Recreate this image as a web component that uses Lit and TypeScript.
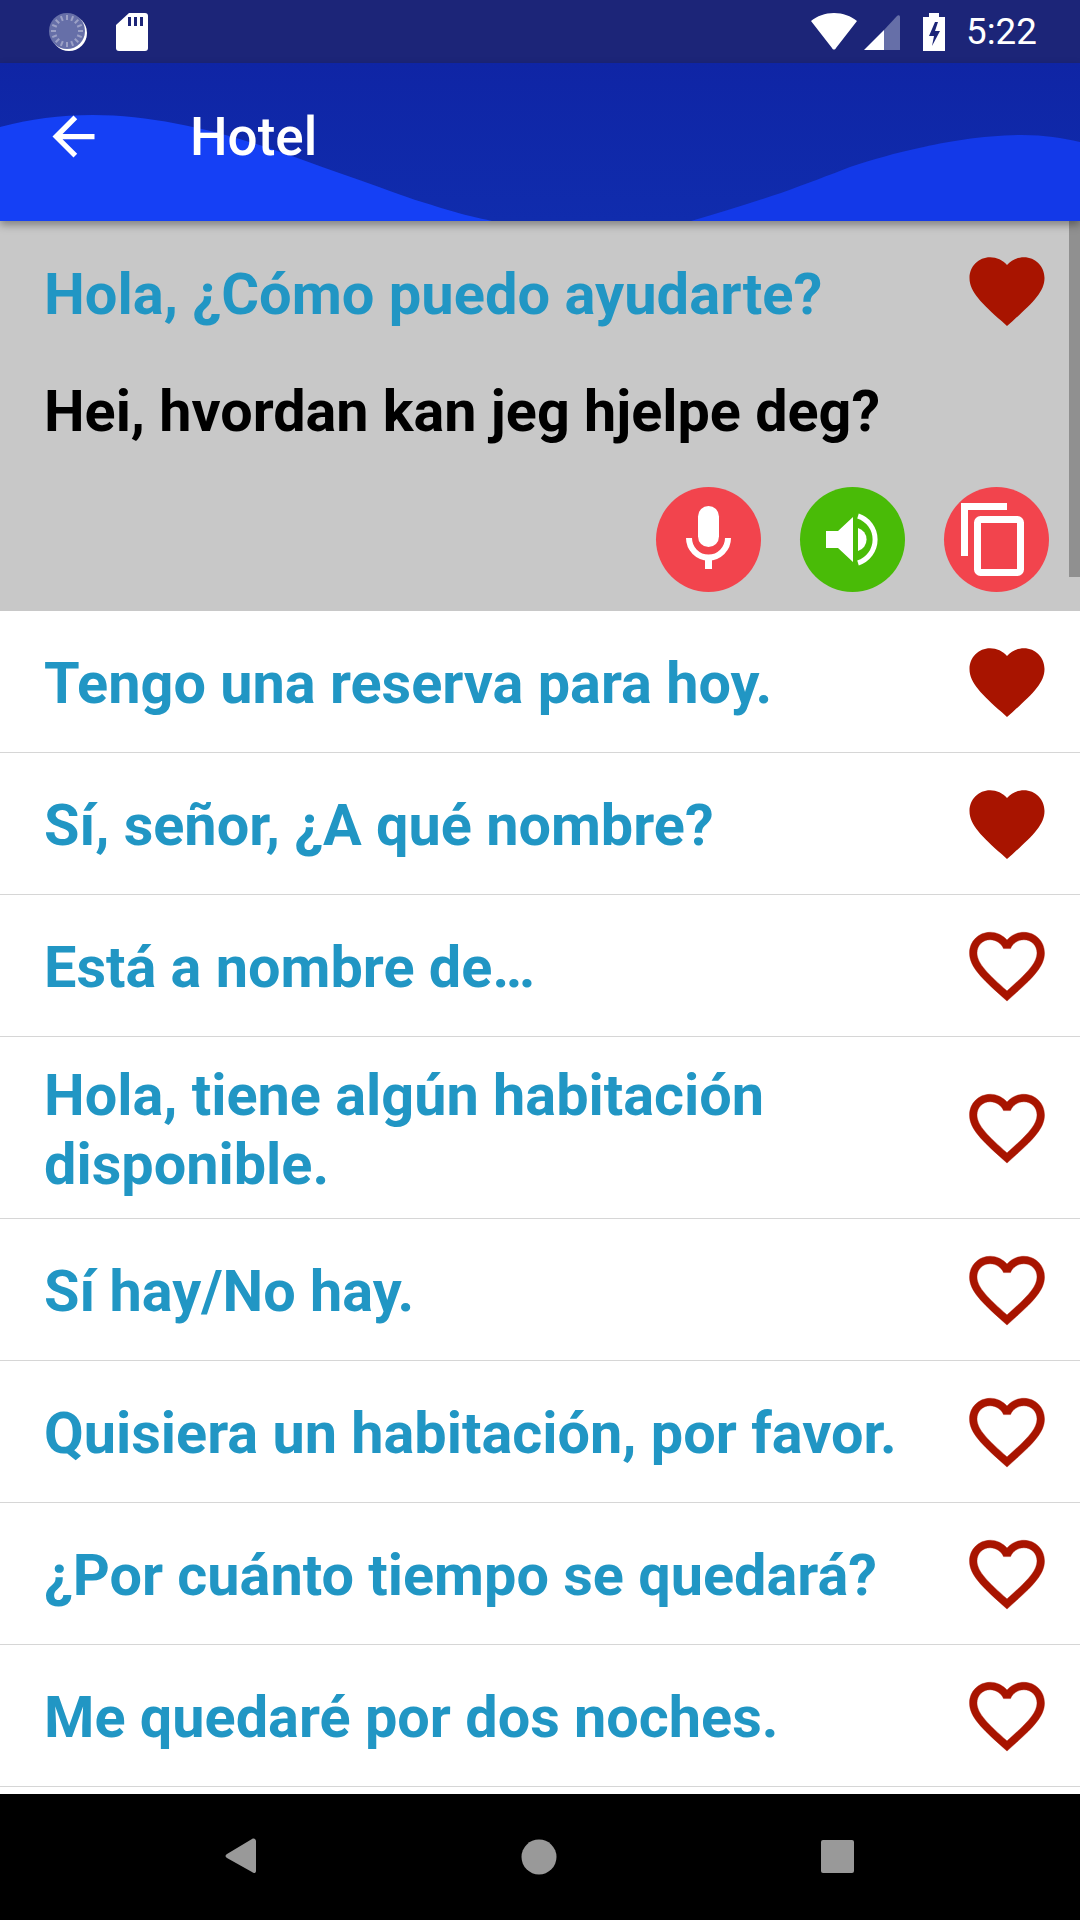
import { LitElement, html, css, svg } from "lit";
import { customElement } from "lit/decorators.js";

const FAV = "M12 21.35l-1.45-1.32C5.4 15.36 2 12.28 2 8.5 2 5.42 4.42 3 7.5 3c1.74 0 3.41.81 4.5 2.09C13.09 3.81 14.76 3 16.5 3 19.58 3 22 5.42 22 8.5c0 3.78-3.4 6.86-8.55 11.54L12 21.35z";
const FAV_O = "M16.5 3c-1.74 0-3.41.81-4.5 2.09C10.91 3.81 9.24 3 7.5 3 4.42 3 2 5.42 2 8.5c0 3.78 3.4 6.86 8.55 11.54L12 21.35l1.45-1.32C18.6 15.36 22 12.28 22 8.5 22 5.42 19.58 3 16.5 3zm-4.4 15.55l-.1.1-.1-.1C7.14 14.24 4 11.39 4 8.5 4 6.5 5.5 5 7.5 5c1.54 0 3.04.99 3.57 2.36h1.87C13.46 5.99 14.96 5 16.5 5c2 0 3.5 1.5 3.5 3.5 0 2.89-3.14 5.74-7.9 10.05z";

const heart = (filled: boolean) => html`<svg class="heart ${filled ? "" : "outline"}" viewBox="0 0 24 24"><path d=${filled ? FAV : FAV_O}></path></svg>`;

const rows: [string, boolean][] = [
  ["Tengo una reserva para hoy.", true],
  ["Sí, señor, ¿A qué nombre?", true],
  ["Está a nombre de…", false],
  ["Hola, tiene algún habitación disponible.", false],
  ["Sí hay/No hay.", false],
  ["Quisiera un habitación, por favor.", false],
  ["¿Por cuánto tiempo se quedará?", false],
  ["Me quedaré por dos noches.", false],
];

const ticks = Array.from({ length: 16 }, (_, i) => {
  const a = (i * Math.PI) / 8;
  return svg`<line x1=${18 + 11 * Math.cos(a)} y1=${18 + 11 * Math.sin(a)} x2=${18 + 16 * Math.cos(a)} y2=${18 + 16 * Math.sin(a)} stroke="#9ca1c6" stroke-width="2"></line>`;
});

@customElement("app-root")
export class AppRoot extends LitElement {
  static styles = css`
    :host { display: block; width: 1080px; height: 1920px; font-family: Roboto, "Liberation Sans", sans-serif; background: #fff; }
    .page { display: flex; flex-direction: column; height: 1920px; overflow: hidden; }
    .status { height: 63px; flex: none; background: #1c2578; display: flex; align-items: center; padding: 0 43px 0 48px; box-sizing: border-box; color: #fff; }
    .status svg { display: block; flex: none; }
    .sd { margin-left: 28px; }
    .spacer { flex: 1; }
    .signal { margin-left: 7px; }
    .battery { margin-left: 23px; }
    .time { margin-left: 21px; font-size: 36.75px; line-height: 63px; width: 71px; }
    .toolbar { height: 158px; flex: none; position: relative; box-sizing: border-box; padding-bottom: 11px; background: linear-gradient(#0f25a5, #102cad); display: flex; align-items: center; color: #fff; box-shadow: 0 4px 8px rgba(0,0,0,.35); z-index: 2; }
    .wave { position: absolute; inset: 0; width: 1080px; height: 158px; }
    .arrow { position: relative; width: 63px; height: 63px; margin-left: 42px; fill: #fff; }
    .title { position: relative; margin-left: 85px; font-size: 53px; font-weight: 500; line-height: 60px; }
    .list { flex: 1; position: relative; overflow: hidden; }
    .scrollbar { position: absolute; top: 0; right: 0; width: 11px; height: 356px; background: #909090; }
    .selected { height: 390px; box-sizing: border-box; background: #c8c8c8; padding: 0 28px 0 44px; display: flex; flex-direction: column; }
    .top { display: flex; align-items: center; justify-content: space-between; height: 143px; }
    .top .src { padding-top: 3px; }
    .top .heart { margin: -4px 0 0; }
    .src { font-size: 57.85px; font-weight: 700; color: #2196c4; line-height: 68.5px; }
    .trans { font-size: 57.5px; font-weight: 700; color: #000; line-height: 68.5px; height: 123px; box-sizing: border-box; padding-top: 14px; }
    .actions { display: flex; justify-content: flex-end; gap: 39px; padding-right: 3px; }
    .btn { width: 105px; height: 105px; border-radius: 50%; display: block; flex: none; }
    .red { background: #f2444d; }
    .green { background: #49bb07; }
    .row { display: flex; align-items: center; justify-content: space-between; box-sizing: border-box; padding: 19px 28px 19px 44px; min-height: 142px; border-bottom: 1px solid #d6d6d6; }
    .row .src { max-width: 880px; padding-top: 6px; font-size: 57.6px; }
    .heart { width: 90px; height: 90px; fill: #a81400; flex: none; display: block; }
    .outline { stroke: #a81400; stroke-width: 0.1; }
    .nav { height: 126px; flex: none; background: #000; display: flex; align-items: center; justify-content: center; }
    .nav svg { display: block; width: 1080px; height: 126px; }
  `;

  render() {
    return html`<div class="page">
      <div class="status">
        <svg width="40" height="38" viewBox="0 0 40 38">
          <circle cx="21" cy="20" r="18" fill="#fff"></circle>
          <circle cx="19" cy="18" r="18" fill="#666fa8"></circle>
          <g transform="translate(1 0)">${ticks}</g>
        </svg>
        <svg class="sd" width="32" height="38" viewBox="0 0 32 38">
          <path d="M13 0h16a3 3 0 0 1 3 3v32a3 3 0 0 1-3 3H3a3 3 0 0 1-3-3V12z" fill="#fff"></path>
          <path d="M12 4h3v9h-3zM18 4h3v9h-3zM24 4h3v9h-3z" fill="#1c2578"></path>
        </svg>
        <div class="spacer"></div>
        <svg width="46" height="37" viewBox="0 0 46 37"><path d="M0 8C6 3 14 0 23 0s17 3 23 8L25 35c-1 2-3 2-4 0z" fill="#fff"></path></svg>
        <svg class="signal" width="36" height="36" viewBox="0 0 36 36">
          <path d="M20 36V16L0 36z" fill="#fff"></path>
          <path d="M20 36V16L33 2c1-1 3-1 3 1v33z" fill="#666fa8"></path>
        </svg>
        <svg class="battery" width="22" height="38" viewBox="0 0 22 38">
          <path d="M6 0h10v4h6v34H0V4h6z" fill="#fff"></path>
          <path d="M12 9l-6 14h5l-2 10 8-15h-5l3-9z" fill="#1c2578"></path>
        </svg>
        <div class="time">5:22</div>
      </div>

      <div class="toolbar">
        <svg class="wave" viewBox="0 0 1080 158" preserveAspectRatio="none">
          <path d="M0 64C30 56 60 52 93 52C165 52 240 74 303 97C330 107 355 115 379 124C405 134 425 140 448 147C465 152 478 155 492 158H0z" fill="#1540f5"></path>
          <path d="M691 158C720 150 750 140 781 130C805 121 830 112 850 104C875 96 895 90 919 85C945 79 985 72 1022 72C1045 72 1062 75 1080 79V158z" fill="#1339e8"></path>
        </svg>
        <svg class="arrow" viewBox="0 0 24 24"><path d="M20 11H7.830l5.590-5.590L12 4l-8 8 8 8 1.410-1.410L7.830 13H20v-2z"></path></svg>
        <div class="title">Hotel</div>
      </div>

      <div class="list">
        <div class="selected">
          <div class="top"><div class="src">Hola, ¿Cómo puedo ayudarte?</div>${heart(true)}</div>
          <div class="trans">Hei, hvordan kan jeg hjelpe deg?</div>
          <div class="actions">
            <svg class="btn red" viewBox="0 0 105 105">
              <rect x="42" y="19" width="21" height="41" rx="10.5" fill="#fff"></rect>
              <path d="M33 51a19.500 19.500 0 0 0 39 0" fill="none" stroke="#fff" stroke-width="6"></path>
              <rect x="49" y="68" width="7" height="14" fill="#fff"></rect>
            </svg>
            <svg class="btn green" viewBox="0 0 105 105">
              <path d="M26 44h12l15-14v45L38 61H26z" fill="#fff"></path>
              <path d="M58 41a12 12 0 0 1 0 23z" fill="#fff"></path>
              <path d="M58 29a24.700 24.700 0 0 1 0 47" fill="none" stroke="#fff" stroke-width="5"></path>
            </svg>
            <svg class="btn red" viewBox="0 0 105 105">
              <path d="M17 69V16h46v7H24v46z" fill="#fff"></path>
              <rect x="33.500" y="32.500" width="43" height="53" rx="3" fill="none" stroke="#fff" stroke-width="7"></rect>
            </svg>
          </div>
        </div>
        ${rows.map(([t, f]) => html`<div class="row"><div class="src">${t}</div>${heart(f)}</div>`)}
        <div class="scrollbar"></div>
      </div>

      <div class="nav">
        <svg viewBox="0 0 1080 126">
          <path d="M256 47v30c0 2-2 3-4 1l-25-14c-2-1-2-3 0-4l25-15c2-1 4 0 4 2z" fill="#999"></path>
          <circle cx="539" cy="63" r="17.500" fill="#999"></circle>
          <rect x="821" y="46" width="33" height="33" rx="2" fill="#999"></rect>
        </svg>
      </div>
    </div>`;
  }
}
